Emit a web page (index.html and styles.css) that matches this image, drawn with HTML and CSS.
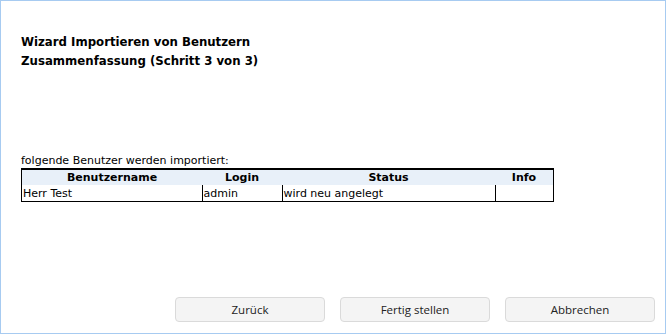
FILE: index.html
```html
<!DOCTYPE html>
<html lang="de">
<head>
    <meta charset="UTF-8">
    <title>Wizard Importieren von Benutzern</title>
    <link rel="stylesheet" href="styles.css">
</head>
<body>
    <div class="window">
        <div class="content">
            <h1 class="title">Wizard Importieren von Benutzern</h1>
            <h2 class="subtitle">Zusammenfassung (Schritt 3 von 3)</h2>

            <p class="caption">folgende Benutzer werden importiert:</p>
            <table class="users">
                <thead>
                    <tr>
                        <th class="col-name">Benutzername</th>
                        <th class="col-login">Login</th>
                        <th class="col-status">Status</th>
                        <th class="col-info">Info</th>
                    </tr>
                </thead>
                <tbody>
                    <tr>
                        <td>Herr Test</td>
                        <td>admin</td>
                        <td>wird neu angelegt</td>
                        <td></td>
                    </tr>
                </tbody>
            </table>
        </div>

        <div class="buttons">
            <button class="btn">Zurück</button>
            <button class="btn">Fertig stellen</button>
            <button class="btn">Abbrechen</button>
        </div>
    </div>
</body>
</html>
```

FILE: styles.css
```css
html, body {
    margin: 0;
    height: 100%;
}
body {
    font-family: "DejaVu Sans", Verdana, sans-serif;
    color: #000;
    background-color: #fff;
}
.window {
    box-sizing: border-box;
    height: 334px;
    border: 1px solid #a7cbf1;
    display: flex;
    flex-direction: column;
}
.content {
    flex: 1;
    padding: 32px 0 0 20px;
}
.title,
.subtitle {
    margin: 0;
    font-size: 11.75px;
    font-weight: bold;
    line-height: 19px;
}
.caption {
    margin: 83px 0 0 0;
    font-size: 11px;
    line-height: 14px;
}
.users {
    border-collapse: collapse;
    width: 533px;
    font-size: 11px;
    border: 1px solid #000;
    border-top-width: 2px;
    table-layout: fixed;
}
.users th {
    background-color: #e8f0f9;
    font-weight: bold;
    text-align: center;
    padding: 0 1px;
    height: 15px;
    line-height: 14px;
}
.users td {
    border-left: 1px solid #000;
    padding: 1px 1px 0;
    height: 15px;
    line-height: 14px;
    text-align: left;
}
.users td:first-child {
    border-left: none;
}
.col-name {
    width: 178px;
}
.col-login {
    width: 78px;
}
.col-status {
    width: 211px;
}
.buttons {
    display: flex;
    justify-content: flex-end;
    gap: 15px;
    padding: 0 10px 11px 0;
}
.btn {
    width: 150px;
    height: 25px;
    background-color: #f4f4f4;
    border: 1px solid #dadada;
    border-radius: 4px;
    font-family: "Open Sans", "Noto Sans", sans-serif;
    font-size: 11.5px;
    color: #222;
    cursor: pointer;
}
```
